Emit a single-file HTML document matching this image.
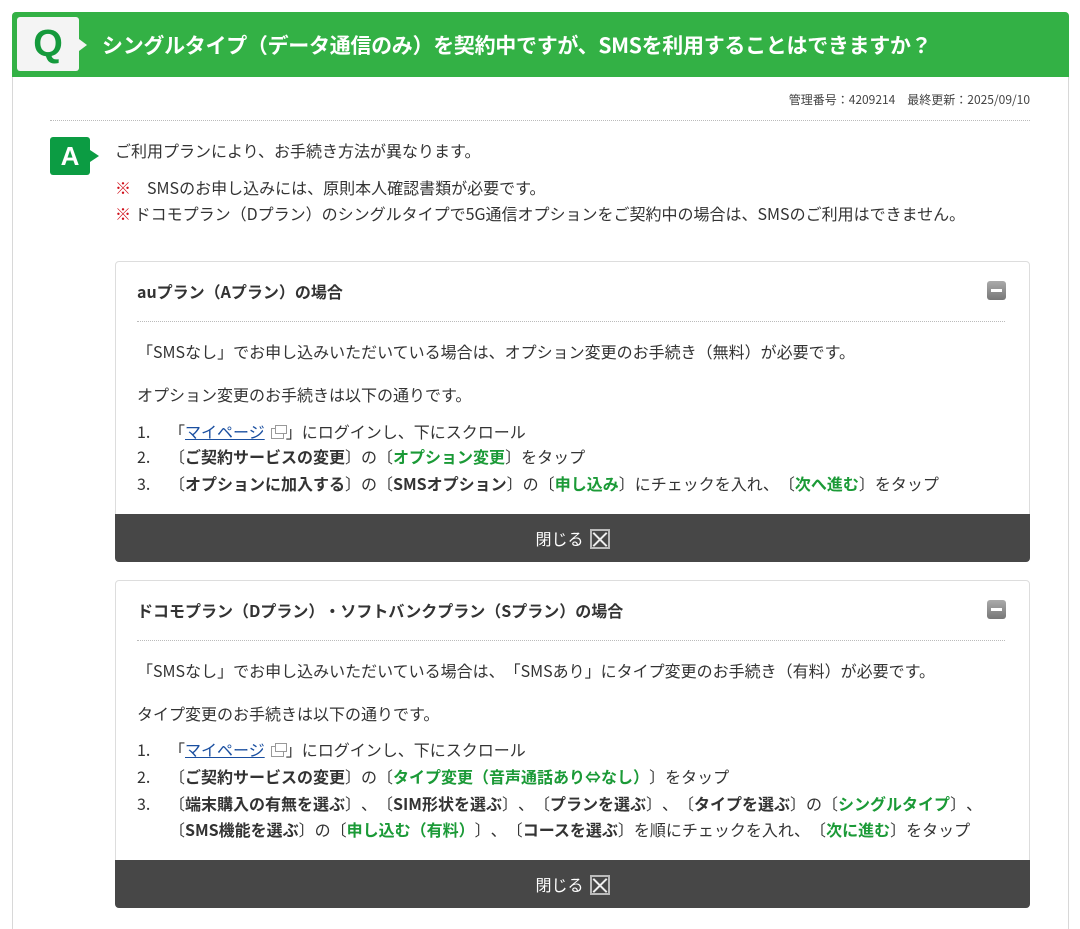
<!DOCTYPE html>
<html><head><meta charset="utf-8">
<style>
*{margin:0;padding:0;box-sizing:border-box}
html{overflow:hidden;height:929px}
body{width:1080px;height:929px;background:#fff;font-family:"Noto Sans CJK JP","Liberation Sans",sans-serif;color:#333;position:relative;overflow:hidden;font-size:16px;text-spacing-trim:space-all;font-feature-settings:"chws" 0,"halt" 0}
.a{position:absolute;white-space:nowrap;line-height:20px}
.card{position:absolute;left:12px;top:12px;width:1057px;height:930px;border:1px solid #d8d8d8;border-radius:4px}
.qbar{position:absolute;left:12px;top:12px;width:1057px;height:65px;background:#33b145;border-radius:4px 4px 0 0}
.qbox{position:absolute;left:17px;top:17px;width:62px;height:54px;background:#f4f4f4;border-radius:3px;color:#159a3c;font:bold 38px/54px "Liberation Sans",sans-serif;text-align:center}
.qarr{position:absolute;left:79px;top:39px;width:0;height:0;border-top:6px solid transparent;border-bottom:6px solid transparent;border-left:8px solid #f4f4f4}
.qt{left:102px;top:31px;color:#fff;font-size:21px;font-weight:bold;line-height:28px;letter-spacing:-0.3px}
.dot{position:absolute;height:0;border-top:1px dotted #bbb}
.abox{position:absolute;left:50px;top:137px;width:40px;height:38px;background:#0c9c43;border-radius:3px;color:#fff;font:bold 26px/38px "Liberation Sans",sans-serif;text-align:center}
.aarr{position:absolute;left:90px;top:150px;border-top:6px solid transparent;border-bottom:6px solid transparent;border-left:9px solid #0c9c43}
.red{color:#d0101b}
.acc{position:absolute;left:115px;width:915px;border:1px solid #ddd;border-radius:4px}
.bar{position:absolute;left:115px;width:915px;height:48px;background:#474747;border-radius:0 0 4px 4px;color:#fff;text-align:center;line-height:48px;font-size:16px}
.bar span.x{display:inline-block;width:20px;height:20px;border:2px solid #bbb;vertical-align:-4px;margin-left:6px;position:relative}
.bar span.x:before,.bar span.x:after{content:"";position:absolute;left:7px;top:-1px;width:2px;height:19px;background:#eee;transform:rotate(45deg)}
.bar span.x:after{transform:rotate(-45deg)}
.minus{position:absolute;left:987px;width:19px;height:19px;background:linear-gradient(#aaa,#777);border-radius:3px}
.minus:after{content:"";position:absolute;left:4px;top:8px;width:11px;height:3px;background:#fff}
b{font-weight:bold}
.g{color:#1b9a37;font-weight:bold}
.lk{color:#1a4fa0;text-decoration:underline}
.ic{display:inline-block;width:13px;height:11px;border:1px solid #999;margin:0 2px 0 6px;vertical-align:-1px;position:relative}
.ic:after{content:"";position:absolute;left:3px;top:-4px;width:10px;height:7px;border:1px solid #999;background:#fff}
.h{font-weight:bold}
</style></head><body>
<div class="card"></div>
<div class="qbar"></div>
<div class="qbox">Q</div><div class="qarr"></div>
<div class="a qt">シングルタイプ（データ通信のみ）を契約中ですが、SMSを利用することはできますか？</div>
<div class="a" style="right:50px;top:90px;font-size:12px;color:#444">管理番号：4209214　最終更新：2025/09/10</div>
<div class="dot" style="left:50px;top:120px;width:980px"></div>
<div class="abox">A</div><div class="aarr"></div>
<div class="a" style="left:115px;top:140px">ご利用プランにより、お手続き方法が異なります。</div>
<div class="a" style="left:115px;top:177px"><span class="red">※</span>　SMSのお申し込みには、原則本人確認書類が必要です。</div>
<div class="a" style="left:115px;top:203px"><span class="red">※</span> ドコモプラン（Dプラン）のシングルタイプで5G通信オプションをご契約中の場合は、SMSのご利用はできません。</div>

<div class="acc" style="top:261px;height:301px"></div>
<div class="a h" style="left:137px;top:281px">auプラン（Aプラン）の場合</div>
<div class="minus" style="top:281px"></div>
<div class="dot" style="left:137px;top:321px;width:868px"></div>
<div class="a" style="left:137px;top:341px">「SMSなし」でお申し込みいただいている場合は、オプション変更のお手続き（無料）が必要です。</div>
<div class="a" style="left:137px;top:384px">オプション変更のお手続きは以下の通りです。</div>
<div class="a" style="left:137px;top:421px">1.</div><div class="a" style="left:169px;top:421px">「<span class="lk">マイページ</span><span class="ic"></span>」にログインし、下にスクロール</div>
<div class="a" style="left:137px;top:446px">2.</div><div class="a" style="left:169px;top:446px">〔<b>ご契約サービスの変更</b>〕の〔<span class="g">オプション変更</span>〕をタップ</div>
<div class="a" style="left:137px;top:473px">3.</div><div class="a" style="left:169px;top:473px">〔<b>オプションに加入する</b>〕の〔<b>SMSオプション</b>〕の〔<span class="g">申し込み</span>〕にチェックを入れ、〔<span class="g">次へ進む</span>〕をタップ</div>
<div class="bar" style="top:514px">閉じる<span class="x"></span></div>

<div class="acc" style="top:580px;height:328px"></div>
<div class="a h" style="left:137px;top:600px">ドコモプラン（Dプラン）・ソフトバンクプラン（Sプラン）の場合</div>
<div class="minus" style="top:600px"></div>
<div class="dot" style="left:137px;top:640px;width:868px"></div>
<div class="a" style="left:137px;top:660px">「SMSなし」でお申し込みいただいている場合は、「SMSあり」にタイプ変更のお手続き（有料）が必要です。</div>
<div class="a" style="left:137px;top:703px">タイプ変更のお手続きは以下の通りです。</div>
<div class="a" style="left:137px;top:739px">1.</div><div class="a" style="left:169px;top:739px">「<span class="lk">マイページ</span><span class="ic"></span>」にログインし、下にスクロール</div>
<div class="a" style="left:137px;top:766px">2.</div><div class="a" style="left:169px;top:766px">〔<b>ご契約サービスの変更</b>〕の〔<span class="g">タイプ変更（音声通話あり⇔なし）</span>〕をタップ</div>
<div class="a" style="left:137px;top:793px">3.</div><div class="a" style="left:169px;top:793px">〔<b>端末購入の有無を選ぶ</b>〕、〔<b>SIM形状を選ぶ</b>〕、〔<b>プランを選ぶ</b>〕、〔<b>タイプを選ぶ</b>〕の〔<span class="g">シングルタイプ</span>〕、</div>
<div class="a" style="left:169px;top:819px">〔<b>SMS機能を選ぶ</b>〕の〔<span class="g">申し込む（有料）</span>〕、〔<b>コースを選ぶ</b>〕を順にチェックを入れ、〔<span class="g">次に進む</span>〕をタップ</div>
<div class="bar" style="top:860px">閉じる<span class="x"></span></div>
</body></html>
